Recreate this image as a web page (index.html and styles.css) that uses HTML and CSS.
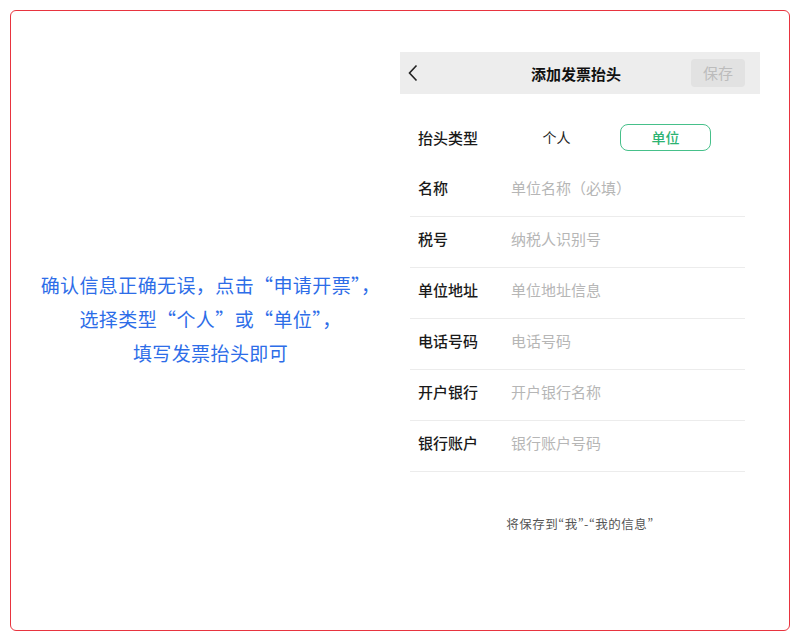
FILE: index.html
```html
<!DOCTYPE html>
<html lang="zh-CN">
<head>
    <meta charset="UTF-8">
    <meta name="viewport" content="width=device-width, initial-scale=1.0">
    <title>添加发票抬头</title>
    <link rel="stylesheet" href="styles.css">
</head>
<body>

<div class="frame">
    <div class="tip">
        <p>确认信息正确无误，点击“申请开票”，</p>
        <p>选择类型“个人”或“单位”，</p>
        <p>填写发票抬头即可</p>
    </div>

    <div class="phone">
        <div class="nav">
            <span class="back">
                <svg width="12" height="18" viewBox="0 0 12 18"><path d="M9.5 1.5 L2.5 9 L9.5 16.5" fill="none" stroke="#222" stroke-width="1.6"/></svg>
            </span>
            <span class="nav-title">添加发票抬头</span>
            <span class="save-btn">保存</span>
        </div>

        <div class="form">
            <div class="type-row">
                <span class="label">抬头类型</span>
                <span class="option">个人</span>
                <span class="option active">单位</span>
            </div>
            <div class="row"><span class="label">名称</span><span class="placeholder">单位名称（必填）</span></div>
            <div class="row"><span class="label">税号</span><span class="placeholder">纳税人识别号</span></div>
            <div class="row"><span class="label">单位地址</span><span class="placeholder">单位地址信息</span></div>
            <div class="row"><span class="label">电话号码</span><span class="placeholder">电话号码</span></div>
            <div class="row"><span class="label">开户银行</span><span class="placeholder">开户银行名称</span></div>
            <div class="row"><span class="label">银行账户</span><span class="placeholder">银行账户号码</span></div>
        </div>

        <div class="note">将保存到“我”-“我的信息”</div>
    </div>
</div>

</body>
</html>
```

FILE: styles.css
```css
body {
    margin: 0;
    padding: 0;
    background-color: #fff;
    font-family: "Noto Sans CJK SC", "Noto Sans", sans-serif;
    color: #222;
}
.frame {
    margin: 10px 0 0 10px;
    width: 780px;
    height: 621px;
    border: 1px solid #e8343f;
    border-radius: 6px;
    display: flex;
    box-sizing: border-box;
}
.tip {
    width: 389px;
    padding-left: 10px;
    box-sizing: border-box;
    display: flex;
    flex-direction: column;
    justify-content: center;
    text-align: center;
    color: #2d6de8;
    font-size: 19px;
    padding-bottom: 4px;
}
.tip p {
    margin: 0;
    line-height: 34px;
    font-feature-settings: "fwid";
    letter-spacing: 0.4px;
}
.phone {
    width: 360px;
    margin-top: 41px;
}
.nav {
    height: 42px;
    background-color: #ededed;
    display: flex;
    align-items: center;
}
.back {
    width: 30px;
    padding-left: 7px;
    display: flex;
    align-items: center;
}
.nav-title {
    flex: 1;
    text-align: center;
    font-size: 15px;
    font-weight: bold;
    color: #111;
    padding-left: 24px;
}
.save-btn {
    width: 54px;
    height: 28px;
    margin-right: 15px;
    background-color: #e2e2e2;
    color: #bcbcbc;
    border-radius: 4px;
    font-size: 15px;
    line-height: 28px;
    text-align: center;
}
.form {
    padding: 0 15px 0 10px;
}
.type-row {
    display: flex;
    align-items: center;
    padding: 30px 0 15px 8px;
}
.label {
    width: 93px;
    font-size: 15px;
    font-weight: 500;
    color: #1a1a1a;
}
.option {
    width: 91px;
    height: 27px;
    box-sizing: border-box;
    line-height: 25px;
    text-align: center;
    font-size: 14px;
    color: #222;
    border: 1px solid transparent;
    border-radius: 8px;
}
.option + .option {
    margin-left: 18px;
}
.option.active {
    border: 1.5px solid #46c08a;
    color: #2db372;
    font-weight: 500;
}
.row {
    display: flex;
    padding: 11px 0 17px 8px;
    line-height: 22px;
    border-bottom: 1px solid #ececec;
    font-size: 15px;
}
.placeholder {
    color: #b6b6b6;
}
.note {
    text-align: center;
    font-size: 12.5px;
    letter-spacing: 0.5px;
    color: #555;
    margin-top: 42px;
    font-feature-settings: "pwid";
}
```
